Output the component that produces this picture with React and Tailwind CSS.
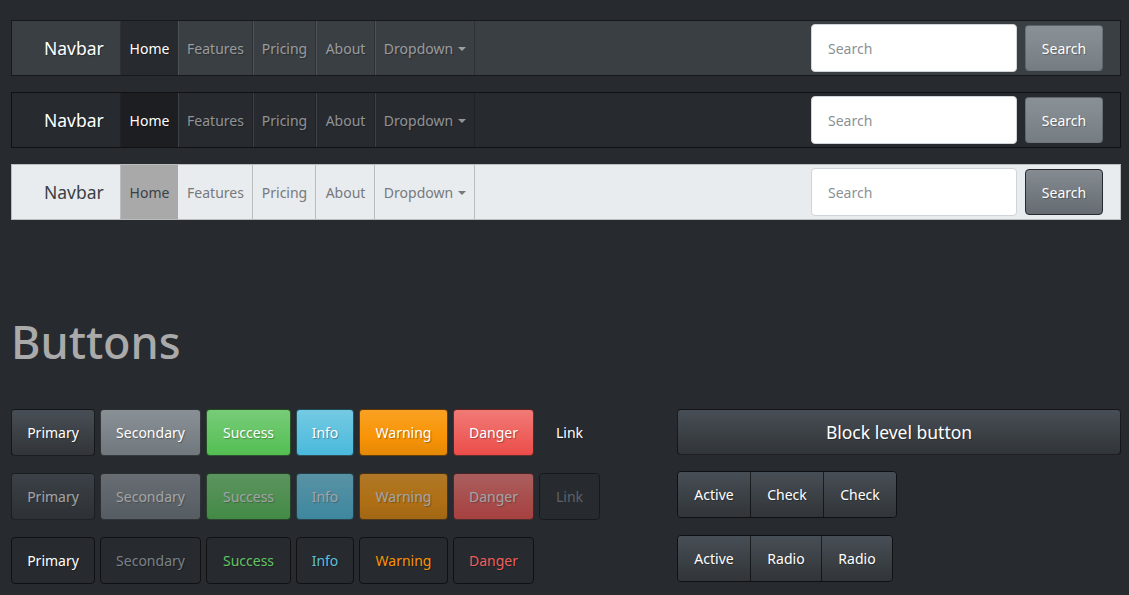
import React from "react";

const SHADOW = "[text-shadow:1px_1px_1px_rgba(0,0,0,0.3)]";

const GRAD = {
  primary: "bg-[linear-gradient(#484e55,#3a3f44_60%,#313539)]",
  secondary: "bg-[linear-gradient(#8a9196,#7a8288_60%,#70787d)]",
  success: "bg-[linear-gradient(#78cc78,#62c462_60%,#53be53)]",
  info: "bg-[linear-gradient(#74cae3,#5bc0de_60%,#4ab9db)]",
  warning: "bg-[linear-gradient(#faa123,#f89406_60%,#e48806)]",
  danger: "bg-[linear-gradient(#f17a77,#ee5f5b_60%,#ec4d49)]",
};

const OUTLINE_TEXT = {
  primary: "text-white",
  secondary: "text-[#7a8288]",
  success: "text-[#62c462]",
  info: "text-[#5bc0de]",
  warning: "text-[#f89406]",
  danger: "text-[#ee5f5b]",
};

const BTNS = [
  { k: "primary", label: "Primary", w: "w-[84px]" },
  { k: "secondary", label: "Secondary", w: "w-[101px]" },
  { k: "success", label: "Success", w: "w-[85px]" },
  { k: "info", label: "Info", w: "w-[58px]" },
  { k: "warning", label: "Warning", w: "w-[89px]" },
  { k: "danger", label: "Danger", w: "w-[81px]" },
];

function Navbar({ variant }) {
  const dark = variant !== "light";
  const bg =
    variant === "primary"
      ? "bg-[#3a3f44] border-black/60"
      : variant === "dark"
      ? "bg-[#272b30] border-black/60"
      : "bg-[#e9ecef] border-black/20";
  const brand = dark ? "text-white" : "text-[#3a3f44]";
  const link = dark ? "text-white/50" : "text-[#76797d]";
  const activeBg =
    variant === "primary"
      ? "bg-[#272b30]"
      : variant === "dark"
      ? "bg-[#1c1e22]"
      : "bg-[#a9a9a9]";
  const activeText = dark ? "text-white" : "text-[#3a3f44]";
  const sep = "border-l border-l-white/10 border-r border-r-black/20";
  const btn =
    variant === "light"
      ? "bg-[linear-gradient(#858b90,#72797e_60%,#656b70)] border-[#272b30]"
      : "bg-[linear-gradient(#8a9196,#7e868c_60%,#757c82)] border-black/20";
  const items = [
    { label: "Features", w: "w-[75px]" },
    { label: "Pricing", w: "w-[63px]" },
    { label: "About", w: "w-[59px]" },
  ];
  return (
    <div className={`flex h-[56px] items-stretch border ${bg} ${dark ? SHADOW : ""}`}>
      <div className={`flex w-[109px] items-center border-r border-r-black/20 pl-[32px] text-[17.5px] ${brand}`}>
        Navbar
      </div>
      <div className={`flex w-[57px] items-center justify-center text-[14px] ${activeBg} ${activeText}`}>
        Home
      </div>
      {items.map((it) => (
        <div key={it.label} className={`flex ${it.w} items-center justify-center text-[14px] ${sep} ${link}`}>
          {it.label}
        </div>
      ))}
      <div className={`flex w-[100px] items-center justify-center gap-[5px] text-[14px] ${sep} ${link}`}>
        <span>Dropdown</span>
        <span className="mt-[2px] h-0 w-0 border-x-[4px] border-t-[4px] border-x-transparent border-t-current" />
      </div>
      <div className="ml-auto mr-[17px] flex items-center gap-[8px]">
        <div className="flex h-[48px] w-[206px] items-center rounded-[4px] border border-[#ced4da] bg-white pl-[16px] text-[14px] text-[#8a9196] [text-shadow:none]">
          Search
        </div>
        <div className={`flex h-[46px] w-[78px] items-center justify-center rounded-[4px] border text-[14px] text-white ${btn} ${SHADOW}`}>
          Search
        </div>
      </div>
    </div>
  );
}

function Btn({ k, label, w, mode }) {
  if (mode === "outline") {
    return (
      <div className={`flex h-[47px] ${w} items-center justify-center rounded-[4px] border border-black/60 text-[14px] ${OUTLINE_TEXT[k]} ${SHADOW}`}>
        {label}
      </div>
    );
  }
  return (
    <div
      className={`flex h-[47px] ${w} items-center justify-center rounded-[4px] border border-black/60 text-[14px] ${GRAD[k]} ${SHADOW} ${
        mode === "disabled" ? "text-[#e4e4e4] opacity-65" : "text-white"
      }`}
    >
      {label}
    </div>
  );
}

function Group({ labels, widths }) {
  return (
    <div className={`flex h-[47px] w-fit overflow-hidden rounded-[4px] border border-black/60 ${SHADOW}`}>
      {labels.map((l, i) => (
        <div
          key={i}
          className={`flex ${widths[i]} items-center justify-center text-[14px] text-white ${GRAD.primary} ${
            i > 0 ? "border-l border-l-black/60" : ""
          }`}
        >
          {l}
        </div>
      ))}
    </div>
  );
}

export default function App() {
  return (
    <div className="min-h-screen bg-[#272b30] font-['Noto_Sans',sans-serif]">
      <div className="ml-[11px] w-[1110px] pt-[20px]">
        <div className="flex flex-col gap-[16px]">
          <Navbar variant="primary" />
          <Navbar variant="dark" />
          <Navbar variant="light" />
        </div>

        <h1 className="mt-[94px] mb-[39px] text-[45px] leading-[56px] font-medium text-[#aaaaaa]">
          Buttons
        </h1>

        <div className="flex">
          <div className="flex w-[666px] flex-col gap-[17px]">
            <div className="flex gap-[5px]">
              {BTNS.map((b) => (
                <Btn key={b.k} {...b} mode="solid" />
              ))}
              <div className={`flex h-[47px] w-[61px] items-center justify-center text-[14px] text-white ${SHADOW}`}>
                Link
              </div>
            </div>
            <div className="flex gap-[5px]">
              {BTNS.map((b) => (
                <Btn key={b.k} {...b} mode="disabled" />
              ))}
              <div className="flex h-[47px] w-[61px] items-center justify-center rounded-[4px] border border-black/40 text-[14px] text-[#5d6268]">
                Link
              </div>
            </div>
            <div className="flex gap-[5px]">
              {BTNS.map((b) => (
                <Btn key={b.k} {...b} mode="outline" />
              ))}
            </div>
          </div>

          <div className="flex flex-1 flex-col gap-[16px]">
            <div className={`flex h-[46px] items-center justify-center rounded-[4px] border border-black/60 text-[17.5px] text-white ${GRAD.primary} ${SHADOW}`}>
              Block level button
            </div>
            <div className="flex flex-col gap-[17px]">
              <Group labels={["Active", "Check", "Check"]} widths={["w-[72px]", "w-[73px]", "w-[73px]"]} />
              <Group labels={["Active", "Radio", "Radio"]} widths={["w-[72px]", "w-[71px]", "w-[71px]"]} />
            </div>
          </div>
        </div>
      </div>
    </div>
  );
}
